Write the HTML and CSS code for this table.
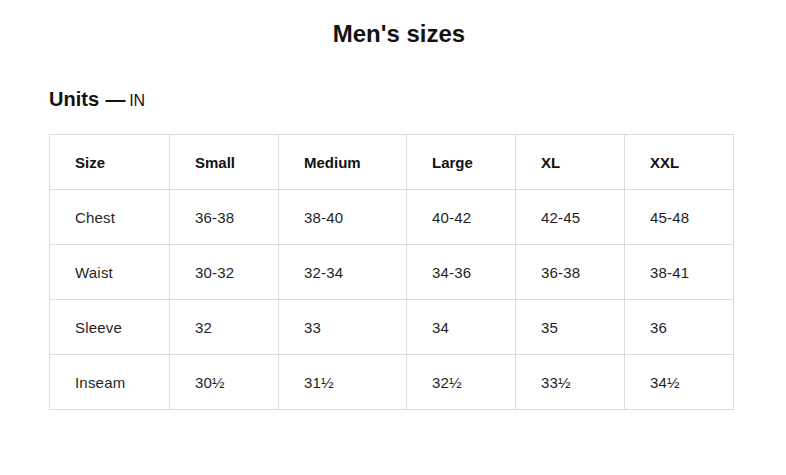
FILE: index.html
```html
<!DOCTYPE html>
<html>
<head>
<meta charset="utf-8">
<link rel="stylesheet" href="styles.css">
</head>
<body>
<main class="page">
  <h1 class="title">Men's sizes</h1>
  <h2 class="units">Units <span class="dash">—</span> <span class="unit">IN</span></h2>
  <table class="sizes">
    <colgroup>
      <col class="c1"><col class="c2"><col class="c3"><col class="c4"><col class="c5"><col class="c6">
    </colgroup>
    <thead>
      <tr><th>Size</th><th>Small</th><th>Medium</th><th>Large</th><th>XL</th><th>XXL</th></tr>
    </thead>
    <tbody>
      <tr><td>Chest</td><td>36-38</td><td>38-40</td><td>40-42</td><td>42-45</td><td>45-48</td></tr>
      <tr><td>Waist</td><td>30-32</td><td>32-34</td><td>34-36</td><td>36-38</td><td>38-41</td></tr>
      <tr><td>Sleeve</td><td>32</td><td>33</td><td>34</td><td>35</td><td>36</td></tr>
      <tr><td>Inseam</td><td>30½</td><td>31½</td><td>32½</td><td>33½</td><td>34½</td></tr>
    </tbody>
  </table>
</main>
</body>
</html>
```
FILE: styles.css
```css
html, body {
  margin: 0;
  padding: 0;
  background: #fff;
}
body {
  font-family: "Liberation Sans", Arial, sans-serif;
  color: #1a1a1a;
}
.page {
  padding: 19px 53px 0 49px;
}
.title {
  margin: 0 -16px 0 0;
  text-align: center;
  font-size: 24px;
  line-height: 29px;
  font-weight: 700;
  color: #121212;
}
.units {
  margin: 39px 0 0 0;
  font-size: 20px;
  line-height: 24px;
  font-weight: 700;
  color: #121212;
}
.dash {
  font-weight: 700;
  margin-left: 1px;
  letter-spacing: 1px;
}
.unit {
  font-size: 16px;
  font-weight: 400;
  margin-left: -3px;
}
.sizes {
  margin-top: 21px;
  border-collapse: collapse;
  table-layout: fixed;
  width: 685px;
}
.c1 { width: 120px; }
.c2 { width: 109px; }
.c3 { width: 128px; }
.c4 { width: 109px; }
.c5 { width: 109px; }
.c6 { width: 109px; }
.sizes th,
.sizes td {
  border: 1px solid #dcdcdc;
  height: 55px;
  padding: 0 10px 0 25px;
  text-align: left;
  font-size: 15px;
  color: #1f1f1f;
  box-sizing: border-box;
}
.sizes td {
  letter-spacing: 0.2px;
}
.sizes th {
  font-weight: 700;
  color: #121212;
}
```
